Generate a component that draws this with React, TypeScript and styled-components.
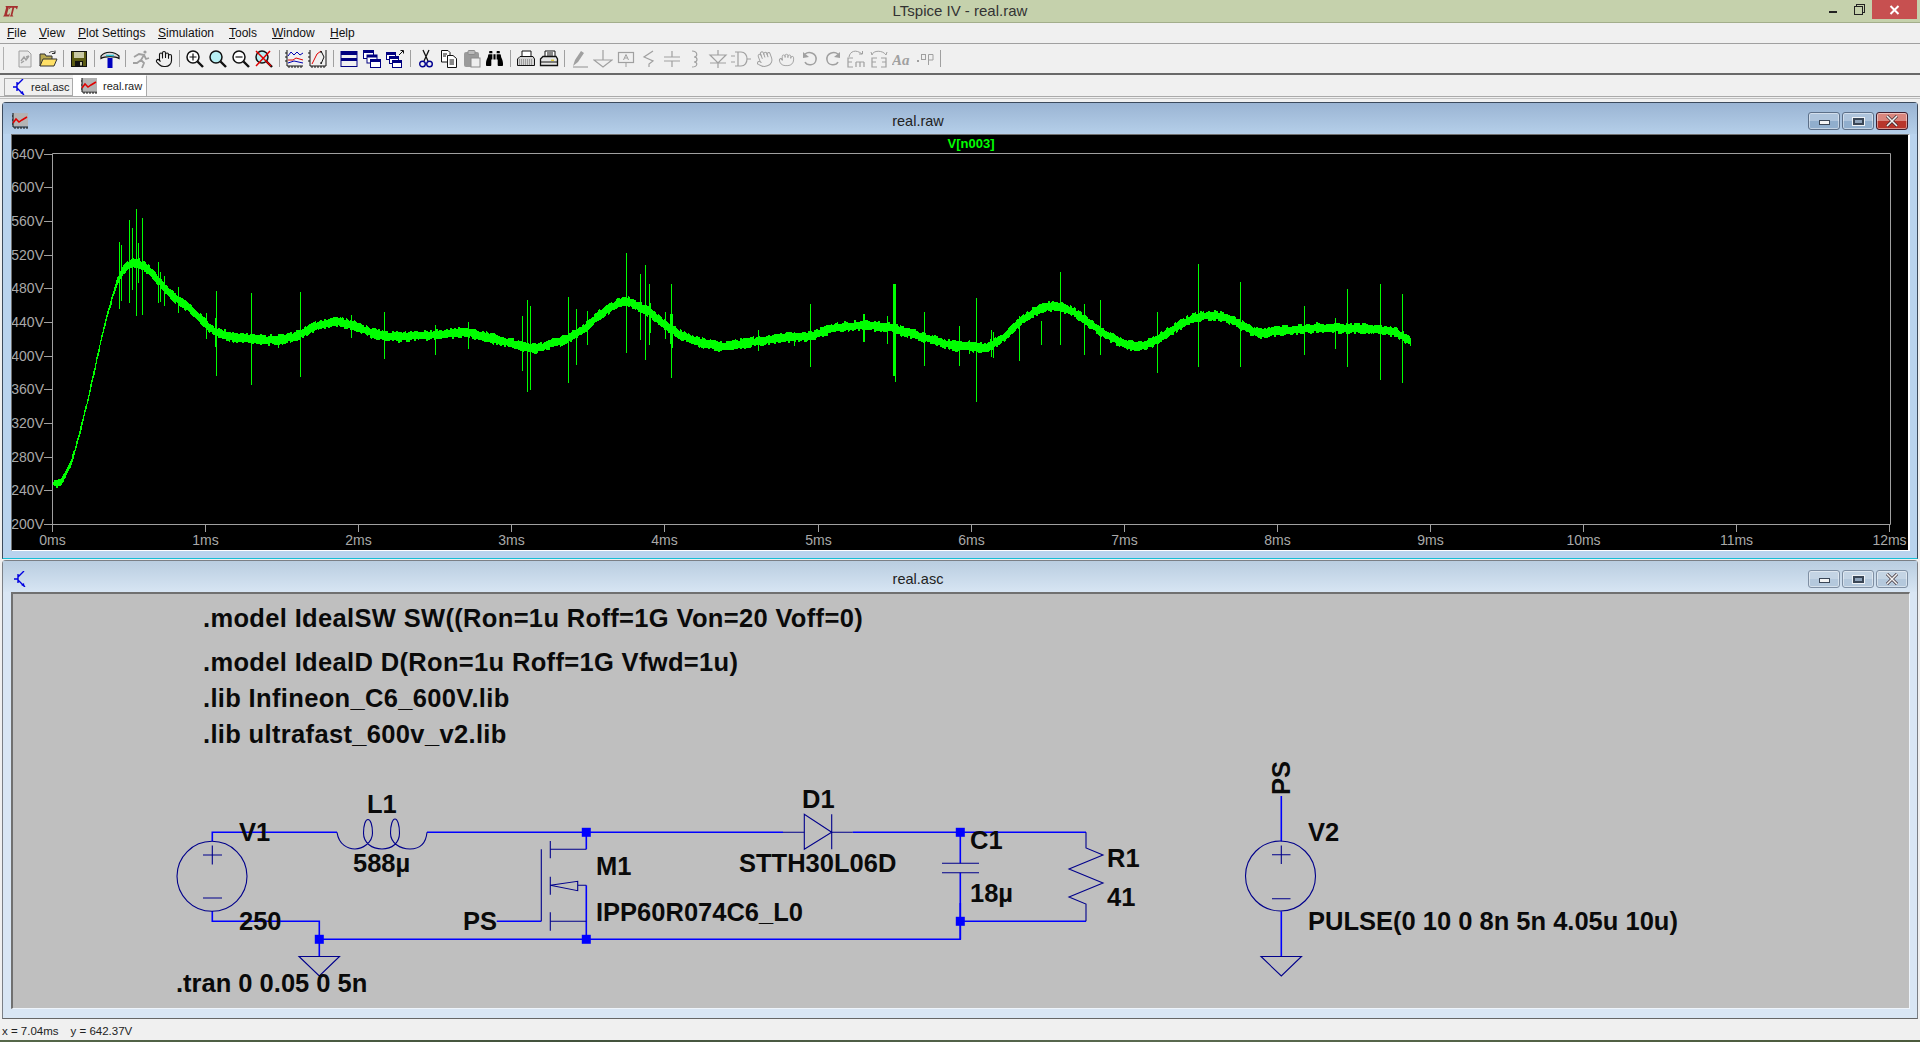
import React, { Fragment, ReactNode } from 'react';
import styled, { createGlobalStyle } from 'styled-components';
import { FaBinoculars } from 'react-icons/fa';
import { Grab, Hand } from 'lucide-react';

const GlobalStyle = createGlobalStyle`
  html, body {
    margin: 0;
    padding: 0;
    background: #f0f0f0;
    font-family: 'Liberation Sans', Arial, sans-serif;
  }
`;

const Page = styled.div`
  width: 1920px;
  height: 1042px;
  display: flex;
  flex-direction: column;
  overflow: hidden;
  background: #f0f0f0;
`;

const TitleBar = styled.div`
  height: 22px;
  display: grid;
  grid-template-columns: 1fr auto 1fr;
  background: #c5d1ac;
  border-bottom: 1px solid #a3ae8c;
`;

const TitleLeft = styled.div`
  display: flex;
  align-items: center;
  padding-left: 3px;
`;

const TitleText = styled.div`
  font-size: 15px;
  line-height: 22px;
  color: #333;
`;

const TitleButtons = styled.div`
  display: flex;
  justify-content: flex-end;
  padding-right: 3px;
`;

const SysButton = styled.div<{ $close?: boolean }>`
  width: ${(p) => (p.$close ? 45 : 26)}px;
  height: 19px;
  display: flex;
  align-items: center;
  justify-content: center;
  background: ${(p) => (p.$close ? '#c75050' : 'transparent')};
`;

const SysMin = styled.div`
  width: 8px;
  height: 2px;
  margin-top: 5px;
  background: #222;
`;

const SysRestore = styled.div`
  width: 7px;
  height: 7px;
  margin: 2px 2px 0 0;
  border: 1px solid #222;
  box-shadow: 2px -2px 0 -1px #c5d1ac, 2px -2px 0 0 #222;
`;

const MenuBar = styled.div`
  height: 20px;
  display: flex;
  align-items: center;
  padding-left: 7px;
  font-size: 12px;
  color: #111;
  border-bottom: 1px solid #a0a0a0;
`;

const MenuItem = styled.span<{ $width: number }>`
  width: ${(p) => p.$width}px;
  white-space: nowrap;
`;

const Mnemonic = styled.span`
  text-decoration: underline;
`;

const Toolbar = styled.div`
  height: 29px;
  display: flex;
  align-items: center;
  border-bottom: 2px solid #696969;
`;

const Grip = styled.div`
  width: 1px;
  height: 23px;
  margin: 0 9px 0 3px;
  background: #b0b0b0;
`;

const ToolButton = styled.div`
  width: 23px;
  height: 22px;
  display: flex;
  align-items: center;
  justify-content: center;
`;

const ToolSep = styled.div`
  width: 1px;
  height: 17px;
  margin: 0 3.5px;
  background: #a0a0a0;
`;

const TabBar = styled.div`
  height: 21px;
  display: flex;
  align-items: flex-end;
  padding-left: 4px;
  border-bottom: 1px solid #aaa;
`;

const Tab = styled.div<{ $active?: boolean }>`
  height: ${(p) => (p.$active ? 22 : 18)}px;
  width: ${(p) => (p.$active ? 74 : 69)}px;
  margin-bottom: ${(p) => (p.$active ? -1 : 0)}px;
  box-sizing: border-box;
  display: flex;
  align-items: center;
  gap: 6px;
  padding-left: 8px;
  font-size: 11px;
  color: #222;
  background: ${(p) => (p.$active ? '#fff' : '#f0f0f0')};
  border: 1px solid #aaa;
  border-top-color: ${(p) => (p.$active ? '#fff' : '#aaa')};
  border-left-width: ${(p) => (p.$active ? 0 : 1)}px;
`;

const MdiArea = styled.div`
  margin-top: 1px;
  padding: 3px 2px 0;
  border-top: 1px solid #c0c0c0;
  display: flex;
  flex-direction: column;
  gap: 1px;
`;

const MdiWindow = styled.div<{ $active?: boolean }>`
  height: ${(p) => (p.$active ? 457 : 459)}px;
  box-sizing: border-box;
  display: flex;
  flex-direction: column;
  padding: 0 7px ${(p) => (p.$active ? 7 : 9)}px 8px;
  border: 1px solid ${(p) => (p.$active ? '#3c4a5c' : '#7b7f85')};
  border-bottom-color: ${(p) => (p.$active ? '#16bfd6' : '#666')};
  border-radius: 4px 4px 0 0;
  background: ${(p) => (p.$active ? '#b9d3ee' : '#d9e6f4')};
`;

const Caption = styled.div<{ $active?: boolean }>`
  height: 31px;
  flex: none;
  box-sizing: border-box;
  margin: 0 -7px 0 -8px;
  padding: 5px 9px 0;
  display: flex;
  align-items: center;
  background: linear-gradient(${(p) => (p.$active ? '#9ab4d3, #b5cfe9' : '#b9cde0, #d7e5f3')});
`;

const CaptionIcon = styled.div`
  width: 16px;
  display: flex;
  justify-content: center;
`;

const CaptionTitle = styled.div`
  flex: 1;
  text-align: center;
  font-size: 14.5px;
  color: #222;
`;

const CaptionButtons = styled.div`
  display: flex;
  gap: 2px;
`;

const CaptionButton = styled.div<{ $variant: 'plain' | 'idle' | 'close' }>`
  width: 32px;
  height: 18px;
  box-sizing: border-box;
  display: flex;
  align-items: center;
  justify-content: center;
  border-radius: 3px;
  border: 1px solid ${(p) => (p.$variant === 'close' ? '#3f1c2c' : p.$variant === 'plain' ? '#5c6f88' : '#7f8fa3')};
  box-shadow: inset 0 0 0 1px rgba(255, 255, 255, 0.45);
  background: ${(p) =>
    p.$variant === 'close'
      ? 'linear-gradient(#d9867e 0 50%, #b8352b 50% 100%)'
      : p.$variant === 'plain'
        ? 'linear-gradient(#aec4dc 0 50%, #90aecd 50% 100%)'
        : 'linear-gradient(#c4d4e4 0 50%, #b4c8dc 50% 100%)'};
`;

const MinGlyph = styled.div`
  width: 9px;
  height: 3px;
  margin-top: 3px;
  background: #f4f4f4;
  border: 1px solid #3a4656;
`;

const MaxGlyph = styled.div`
  width: 7px;
  height: 3px;
  background: #8fa3ba;
  border: 2px solid #3a4656;
  box-shadow: 0 0 0 1px #eef2f6;
`;

const PlotClient = styled.div`
  flex: 1;
  background: #000;
  border-style: solid;
  border-color: #707070 #fff #fff #707070;
  border-width: 1px 2px 1px 1px;
  overflow: hidden;
`;

const SchematicClient = styled.div`
  flex: 1;
  background: #bfbfbf;
  border-style: solid;
  border-color: #707070 #eef4fb #eef4fb #707070;
  border-width: 2px 1px 1px 2px;
  overflow: hidden;
`;

const Canvas = styled.svg`
  display: block;
`;

const AxisText = styled.text`
  font-family: 'Liberation Sans', Arial, sans-serif;
  font-size: 14px;
  fill: #a9a9a9;
`;

const TraceName = styled.text`
  font-family: 'Liberation Sans', Arial, sans-serif;
  font-size: 13px;
  font-weight: 700;
  fill: #00ff00;
`;

const SchemText = styled.text<{ $spaced?: boolean }>`
  font-family: 'Liberation Sans', Arial, sans-serif;
  font-size: 25.5px;
  font-weight: 700;
  fill: #0a0a0a;
  letter-spacing: ${(p) => (p.$spaced ? '0.34px' : '0')};
`;

const StatusBar = styled.div`
  height: 21px;
  display: flex;
  align-items: center;
  gap: 12px;
  padding: 2px 0 0 2px;
  box-sizing: border-box;
  font-size: 11.5px;
  color: #222;
  background: #f0f0f0;
`;

const DesktopStrip = styled.div`
  height: 2px;
  background: linear-gradient(90deg, #56684a, #42523c 30%, #5a6a50 60%, #4b5a3c);
`;

// ---- plot data, page pixels

const X0 = 52.5;
const PX_MS = 153.1;
const yOf = (v: number) => 153.5 + ((640 - v) * 370.5) / 440;

const curve: [number, number][] = [
  [0, 249], [0.03, 245], [0.07, 253], [0.126, 274], [0.18, 312], [0.235, 351], [0.29, 399], [0.345, 442],
  [0.4, 478], [0.45, 502], [0.52, 512], [0.595, 507], [0.68, 492], [0.77, 472], [0.88, 458], [0.965, 444],
  [1.05, 428], [1.18, 422], [1.4, 418], [1.53, 420], [1.62, 426], [1.73, 436], [1.86, 441], [1.99, 434],
  [2.12, 424], [2.25, 422], [2.5, 425], [2.7, 428], [2.92, 418], [3.14, 407], [3.31, 417], [3.44, 427],
  [3.57, 449], [3.73, 466], [3.86, 456], [3.95, 443], [4.08, 426], [4.23, 415], [4.38, 410], [4.6, 417],
  [4.84, 423], [4.93, 422], [5.1, 433], [5.28, 436], [5.45, 434], [5.65, 424], [5.89, 411], [6.02, 411],
  [6.06, 407], [6.19, 418], [6.3, 438], [6.42, 454], [6.54, 460], [6.66, 453], [6.85, 428], [7.0, 413],
  [7.1, 410], [7.2, 417], [7.34, 434], [7.46, 446], [7.58, 448], [7.7, 443], [7.86, 426], [8.0, 429],
  [8.26, 433], [8.6, 432], [8.78, 428], [8.87, 415],
];

const spikes: [number, number, number][] = [
  [119, 242, 309], [121, 245, 301], [129, 220, 303], [132, 228, 290], [136, 209, 316], [138, 243, 283],
  [142, 218, 315], [158, 262, 303], [160, 272, 302], [164, 276, 306], [178, 287, 313], [206, 313, 339],
  [215, 318, 347], [216, 291, 376], [251, 293, 385], [278, 337, 348], [300, 292, 377], [351, 315, 338],
  [384, 312, 359], [435, 325, 355], [468, 322, 349], [522, 316, 371], [527, 300, 392], [530, 306, 390],
  [568, 297, 383], [576, 309, 365], [587, 311, 345], [626, 253, 353], [640, 274, 340], [645, 265, 360],
  [649, 284, 345], [650, 303, 333], [665, 312, 339], [671, 284, 378], [670, 314, 344], [672, 314, 348],
  [758, 330, 351], [794, 332, 346], [810, 304, 367], [863, 314, 342], [864, 314, 342], [887, 316, 344],
  [893, 284, 376], [894, 284, 376], [895, 284, 382], [924, 312, 366], [959, 326, 366], [969, 340, 354],
  [976, 298, 402], [991, 330, 357], [993, 332, 358], [1019, 316, 361], [1041, 321, 345], [1060, 272, 345],
  [1084, 304, 355], [1100, 300, 355], [1157, 312, 373], [1198, 264, 367], [1240, 282, 367], [1304, 306, 355],
  [1335, 318, 349], [1347, 289, 367], [1380, 284, 380], [1402, 294, 383],
];

const rawV = (ms: number) => {
  for (let i = 1; i < curve.length; i++) {
    if (ms <= curve[i][0]) {
      const [a, va] = curve[i - 1];
      const [b, vb] = curve[i];
      return va + ((vb - va) * (ms - a)) / (b - a);
    }
  }
  return curve[curve.length - 1][1];
};

const smoothV = (ms: number) => {
  let sum = 0;
  for (let k = -4; k <= 4; k++) sum += rawV(Math.max(0, Math.min(8.87, ms + (k * 1.5) / PX_MS)));
  return sum / 9;
};

// noise is held for two columns, the real trace is blocky rather than fuzzy
const buildTrace = () => {
  let d = '';
  let seed = 12345;
  const rnd = () => {
    seed = (seed * 1103515245 + 12345) & 0x7fffffff;
    return seed / 0x7fffffff;
  };
  let nTop = 0;
  let nBottom = 0;
  for (let x = 53; x <= 1410; x++) {
    const ms = (x - X0) / PX_MS;
    const y = yOf(smoothV(ms));
    const band = ms < 0.4 ? 1.8 : ms < 0.55 ? 3 : 3.2;
    if (x % 2 === 0) {
      nTop = rnd() * 2.6;
      nBottom = rnd() * 2.6;
    }
    const top = y - band - nTop;
    const bottom = y + band + nBottom;
    d += `M${x}.5 ${top.toFixed(0)}V${bottom.toFixed(0)}`;
  }
  for (const [x, a, b] of spikes) d += `M${x}.5 ${a}V${b}`;
  return d;
};

const tracePath = buildTrace();

const yLabels = [640, 600, 560, 520, 480, 440, 400, 360, 320, 280, 240, 200];
const xLabels = Array.from({ length: 13 }, (_, i) => i);

const PlotCanvas = () => (
  <Canvas width={1896} height={415} viewBox="12 135 1896 415">
    <path d="M52.5 153.5H1890.5V524.5H52.5Z" fill="none" stroke="#a0a0a0" />
    {yLabels.map((v) => {
      const y = Math.round(yOf(v)) + 0.5;
      return (
        <Fragment key={v}>
          <path d={`M44 ${y}H52`} stroke="#a0a0a0" />
          <AxisText x={44} y={y + 4} textAnchor="end">{`${v}V`}</AxisText>
        </Fragment>
      );
    })}
    {xLabels.map((m) => {
      const x = Math.round(X0 + m * PX_MS - 0.5) + 0.5;
      return (
        <Fragment key={m}>
          <path d={`M${x} 524V532`} stroke="#a0a0a0" />
          <AxisText x={x} y={545} textAnchor="middle">{`${m}ms`}</AxisText>
        </Fragment>
      );
    })}
    <TraceName x={971} y={148} textAnchor="middle">V[n003]</TraceName>
    <path d={tracePath} stroke="#00ff00" strokeWidth={1} fill="none" shapeRendering="crispEdges" />
  </Canvas>
);

// ---- schematic, page pixels

const WIRE = '#0000ff';
const PART = '#00008b';

const wires = [
  'M212.3 841V832.3H337',
  'M427 832.3H783',
  'M852.7 832.3H1086',
  'M212.3 911V921.3H319.3V956',
  'M319.3 939.3H960.3V903',
  'M960.3 832.3V863.3',
  'M960.3 872.7V939.3',
  'M960.3 921.3H1086',
  'M496.7 921.3H541.3',
  'M586.3 832.3V849.3',
  'M586.3 885.3V939.3',
  'M1281.3 796V841.3',
  'M1281.3 911.3V956',
];

const parts = [
  'M203 855H222M212.3 845.5V864.5M203 898H222',
  'M337 832.3C339 845 348 849 355 849C362 849 372.5 843 372.5 833C372.5 825 370.5 819.5 368 819.5C365.5 819.5 363.5 825 363.5 833C363.5 843 372 849 382 849C392 849 399.5 843 399.5 833C399.5 825 397.5 819 395 819C392.5 819 390.5 825 390.5 833C390.5 843 400 849 410 849C420 849 426 843 427 832.3',
  'M299 956.5H339.5L319.3 976Z',
  'M541.3 849.3V921.3',
  'M550.3 841V858.3M550.3 876.7V894.7M550.3 912.3V930.7',
  'M550.3 849.3H586.3M550.3 921.3H586.3',
  'M550.3 885.3L577.7 881.3V890.7ZM577.7 885.3H586.3',
  'M783 832.3H804.3M831.7 832.3H852.7',
  'M804.3 814.3V849.3L831.7 832.3ZM831.7 814.3V849.3',
  'M942 863.3H979M942 872.7H979',
  'M1086 832.3V848L1103 855L1069 869L1103 883L1069 897L1086 904V921.3',
  'M1272 854.7H1290.5M1281.3 845.5V864M1272 898.7H1290.5',
  'M1261 956.5H1301.5L1281.3 976Z',
];

const junctions: [number, number][] = [
  [319.3, 939.3], [586.3, 832.3], [586.3, 939.3], [960.3, 832.3], [960.3, 921.3],
];

const directives: [string, number][] = [
  ['.model IdealSW SW((Ron=1u Roff=1G Von=20 Voff=0)', 627],
  ['.model IdealD D(Ron=1u Roff=1G Vfwd=1u)', 671],
  ['.lib Infineon_C6_600V.lib', 707],
  ['.lib ultrafast_600v_v2.lib', 743],
];

const labels: [string, number, number][] = [
  ['V1', 239, 841],
  ['L1', 367, 813],
  ['588µ', 353, 872],
  ['250', 239, 930],
  ['PS', 463, 930],
  ['M1', 596, 875],
  ['IPP60R074C6_L0', 596, 921],
  ['D1', 802, 808],
  ['STTH30L06D', 739, 872],
  ['C1', 970, 849],
  ['18µ', 970, 902],
  ['R1', 1107, 867],
  ['41', 1107, 906],
  ['.tran 0 0.05 0 5n', 176, 992],
  ['V2', 1308, 841],
  ['PULSE(0 10 0 8n 5n 4.05u 10u)', 1308, 930],
];

const SchematicCanvas = () => (
  <Canvas width={1896} height={414} viewBox="13 594 1896 414">
    {wires.map((d) => (
      <path key={d} d={d} stroke={WIRE} strokeWidth={1.6} fill="none" />
    ))}
    {parts.map((d) => (
      <path key={d} d={d} stroke={PART} strokeWidth={1.1} fill="none" />
    ))}
    <circle cx={212} cy={876.3} r={35} stroke={PART} strokeWidth={1.1} fill="none" />
    <circle cx={1280.5} cy={876} r={35} stroke={PART} strokeWidth={1.1} fill="none" />
    {junctions.map(([x, y]) => (
      <rect key={`${x}-${y}`} x={x - 4.5} y={y - 4.5} width={9} height={9} fill={WIRE} />
    ))}
    {directives.map(([t, y]) => (
      <SchemText key={t} x={203} y={y} $spaced>{t}</SchemText>
    ))}
    {labels.map(([t, x, y]) => (
      <SchemText key={t} x={x} y={y}>{t}</SchemText>
    ))}
    <SchemText x={0} y={0} letterSpacing={1} transform="translate(1289.5 795) rotate(-90)">PS</SchemText>
  </Canvas>
);

// ---- icons

const Ico = ({ children, size = 20 }: { children: ReactNode; size?: number }) => (
  <svg width={size} height={size} viewBox="0 0 20 20" fill="none">
    {children}
  </svg>
);

const Magnifier = ({ children, fill = '#fff' }: { children?: ReactNode; fill?: string }) => (
  <Ico>
    <circle cx="8" cy="8" r="6" fill={fill} stroke="#111" strokeWidth="1.5" />
    <path d="M12.5 12.5L18 18" stroke="#111" strokeWidth="2.4" />
    {children}
  </Ico>
);

const GRAY = '#a0a0a0';

const PlotIcon = ({ size = 16 }: { size?: number }) => (
  <svg width={size} height={size} viewBox="0 0 16 16" fill="none">
    <rect x="1" y="0" width="15" height="13" fill="#b4b4b4" />
    <path d="M1 0V14H16M3 14V16M6 14V16M9 14V16M12 14V16M15 14V16M0 3H1M0 7H1M0 11H1" stroke="#111" />
    <path d="M1 10L4 6L7 9L10 7L15 4" stroke="#e00000" strokeWidth="1.5" />
  </svg>
);

const TransistorIcon = ({ width = 12, height = 16 }: { width?: number; height?: number }) => (
  <svg width={width} height={height} viewBox="0 0 12 16" fill="none">
    <path d="M0 8H4M4 3V12M4 6L10 0M4 9L11 16" stroke="#0000e0" strokeWidth="1.4" />
    <path d="M7 14L10 12L10.5 15.5Z" fill="#0000e0" />
  </svg>
);

const tools: (ReactNode | null)[] = [
  <Ico key="new">
    <path d="M4 2H13L16 5V18H4Z" fill="#e9e9e9" stroke={GRAY} />
    <path d="M6 12L9 8L11 11L14 7M14 7L11 8M6 14L9 12" stroke={GRAY} strokeWidth="1.4" />
  </Ico>,
  <Ico key="open">
    <path d="M2 17V5H7L8 7H14V10" fill="#b8a850" stroke="#333" />
    <path d="M2 17L5 10H19L16 17Z" fill="#ffe066" stroke="#333" />
    <path d="M11 4C13 2 16 2 17 4M17 1.5V4.5H14" stroke="#333" />
  </Ico>,
  null,
  <Ico key="save">
    <rect x="2.5" y="2.5" width="15" height="15" fill="#5a5a12" stroke="#111" />
    <rect x="5" y="3" width="10" height="6" fill="#c9c9a4" />
    <rect x="6" y="12" width="8" height="5.5" fill="#111" />
    <rect x="11" y="13" width="2" height="3.5" fill="#c9c9a4" />
  </Ico>,
  null,
  <Ico key="hammer">
    <path d="M1 7C5 2 14 2 19 7V9.5C15 7 5 7 1 9.5Z" fill="#d8d8d8" stroke="#111" strokeWidth="1.2" />
    <path d="M6 6.5H14" stroke="#30c8d8" strokeWidth="1.4" />
    <rect x="7.5" y="9" width="5" height="10" fill="#0000c0" />
  </Ico>,
  null,
  <Ico key="run">
    <circle cx="14" cy="3" r="1.6" fill={GRAY} />
    <path d="M3 8L8 5L13 6L10 11L13 14L11 19M10 11L6 14L2 14M13 6L15 10L18 9" stroke={GRAY} strokeWidth="1.8" />
  </Ico>,
  <Hand key="hand" size={18} strokeWidth={1.5} color="#111" />,
  null,
  <Magnifier key="zin">
    <path d="M4.5 8H11.5M8 4.5V11.5" stroke="#111" strokeWidth="1.2" />
  </Magnifier>,
  <Magnifier key="zarea" fill="#b8f0f4" />,
  <Magnifier key="zout">
    <path d="M4.5 8H11.5" stroke="#111" strokeWidth="1.2" />
  </Magnifier>,
  <Magnifier key="zoff" fill="#b8f0f4">
    <path d="M2 2L17 17M16 2L2 17" stroke="#e00000" strokeWidth="1.5" />
  </Magnifier>,
  null,
  <Ico key="plot1">
    <path d="M2 1V17H18M4 17V19M7 17V19M10 17V19M13 17V19M16 17V19M0 4H2M0 8H2M0 12H2" stroke="#111" />
    <path d="M3 7L6 3L9 6L12 3L15 6L18 4" stroke="#0000b0" />
    <path d="M3 11H8L11 9L18 11" stroke="#e00000" />
    <path d="M3 14L9 12L18 14" stroke="#0000b0" />
  </Ico>,
  <Ico key="plot2">
    <path d="M2 1V17H18M4 17V19M7 17V19M10 17V19M13 17V19M16 17V19M0 4H2M0 8H2M0 12H2M18 1V17" stroke="#111" />
    <path d="M4 15L9 5L13 2" stroke="#e00000" />
    <path d="M13 2L16 8L13 15M13 2V4M13 15V13" stroke="#111" />
  </Ico>,
  null,
  <Ico key="tile">
    <rect x="2" y="2.5" width="16" height="15" stroke="#000080" strokeWidth="1" />
    <rect x="2" y="3" width="16" height="3" fill="#000080" />
    <rect x="2" y="9" width="16" height="3" fill="#000080" />
  </Ico>,
  <Ico key="casc">
    <rect x="1.5" y="1.5" width="10" height="8" fill="#fff" stroke="#000080" />
    <rect x="1.5" y="1.5" width="10" height="2.5" fill="#000080" />
    <rect x="5" y="6" width="10" height="8" fill="#fff" stroke="#000080" />
    <rect x="5" y="6" width="10" height="2.5" fill="#000080" />
    <rect x="8.5" y="10.5" width="10" height="8" fill="#fff" stroke="#000080" />
    <rect x="8.5" y="10.5" width="10" height="2.5" fill="#000080" />
  </Ico>,
  <Ico key="casc2">
    <rect x="1.5" y="3.5" width="9" height="7" fill="#fff" stroke="#000080" />
    <rect x="1.5" y="3.5" width="9" height="2.5" fill="#000080" />
    <rect x="4.5" y="7.5" width="9" height="7" fill="#fff" stroke="#000080" />
    <rect x="4.5" y="7.5" width="9" height="2.5" fill="#000080" />
    <rect x="7.5" y="11.5" width="9" height="7" fill="#fff" stroke="#000080" />
    <rect x="7.5" y="11.5" width="9" height="2.5" fill="#000080" />
    <path d="M14 6L18 2M15.5 1.5H18.5V4.5" stroke="#111" />
  </Ico>,
  null,
  <Ico key="cut">
    <path d="M7 1L12 12M13 1L8 12" stroke="#111" strokeWidth="1.3" />
    <circle cx="6.5" cy="15" r="2.8" stroke="#000090" strokeWidth="1.4" />
    <circle cx="13.5" cy="15" r="2.8" stroke="#000090" strokeWidth="1.4" />
  </Ico>,
  <Ico key="copy">
    <path d="M2.5 1.5H9L11 3.5V13H2.5Z" fill="#fff" stroke="#111" />
    <path d="M8.5 6.5H14L17.5 9.5V18.5H8.5Z" fill="#fff" stroke="#111" />
    <path d="M4 5H8M4 7H7M10.5 11H15M10.5 13H15M10.5 15H15" stroke="#111" />
  </Ico>,
  <Ico key="paste">
    <rect x="2" y="3" width="15" height="15" rx="2" fill="#9a9a9a" />
    <rect x="6" y="1.5" width="7" height="4" rx="1" fill="#bbb" stroke="#8a8a8a" />
    <rect x="9" y="9" width="9" height="9" fill="#eee" stroke="#8a8a8a" />
  </Ico>,
  <FaBinoculars key="bino" size={17} color="#000" />,
  null,
  <Ico key="preview">
    <path d="M6 2H15V8H6Z" fill="#fff" stroke="#111" />
    <path d="M1.5 10L4 7.5H17L18.5 10V16.5H1.5Z" fill="#d4d4d4" stroke="#111" />
    <path d="M3 11H17M3 13H17M3 15H17" stroke="#666" strokeDasharray="1 1" />
  </Ico>,
  <Ico key="print">
    <path d="M6 2H16V8H6Z" fill="#fff" stroke="#111" />
    <path d="M8 4H14M8 6H14" stroke="#111" />
    <path d="M1.5 10L4 7.5H17L18.5 10V16.5H1.5Z" fill="#e4e4e4" stroke="#111" strokeWidth="1.3" />
    <path d="M1.5 13H18.5" stroke="#111" />
    <rect x="12" y="10.5" width="3" height="1.5" fill="#e0d040" />
  </Ico>,
  null,
  <Ico key="wire">
    <path d="M3 18H18" stroke={GRAY} strokeWidth="1.2" />
    <path d="M3 17L5 11L11 2L14 4L8 13Z" fill={GRAY} />
  </Ico>,
  <Ico key="gnd">
    <path d="M10 1V11M1 11H19L10 18Z" stroke={GRAY} strokeWidth="1.2" />
  </Ico>,
  <Ico key="label">
    <rect x="2.5" y="3.5" width="15" height="10" stroke={GRAY} strokeWidth="1.2" />
    <path d="M10 14V18M7.5 11L10 5.5L12.5 11M8.5 9H11.5" stroke={GRAY} />
  </Ico>,
  <Ico key="res">
    <path d="M14 2L5 8L14 12L10 15V18" stroke={GRAY} strokeWidth="1.2" />
  </Ico>,
  <Ico key="cap">
    <path d="M10 2V8M2 8H18M2 12H18M10 12V18" stroke={GRAY} strokeWidth="1.2" />
  </Ico>,
  <Ico key="ind">
    <path d="M7 2C13 2 13 8 9 8M9 8C13 8 13 13 9 13M9 13C13 13 13 18 7 18" stroke={GRAY} strokeWidth="1.2" />
  </Ico>,
  <Ico key="diode">
    <path d="M10 1V6M2 6H18L10 14ZM2 14H18M10 14V19" stroke={GRAY} strokeWidth="1.2" />
  </Ico>,
  <Ico key="comp">
    <path d="M0 7H4M0 13H4M4 3H10C18 3 18 17 10 17H4M7 3V17M16 10H20" stroke={GRAY} strokeWidth="1.2" />
  </Ico>,
  <Hand key="move" size={18} strokeWidth={1.3} color={GRAY} style={{ transform: 'rotate(-20deg)' }} />,
  <Grab key="drag" size={17} strokeWidth={1.3} color={GRAY} />,
  <Ico key="undo">
    <path d="M5 5C9 2 17 4 16 11C15 17 7 17 5 13" stroke={GRAY} strokeWidth="1.5" />
    <path d="M3 3V9L9 8Z" fill={GRAY} />
  </Ico>,
  <Ico key="redo">
    <path d="M15 5C11 2 3 4 4 11C5 17 13 17 15 13" stroke={GRAY} strokeWidth="1.5" />
    <path d="M17 3V9L11 8Z" fill={GRAY} />
  </Ico>,
  <Ico key="rot">
    <path d="M3 8C4 2 10 0 16 5M13 5H16.5V2" stroke={GRAY} />
    <path d="M7 9H2V18H7M2 13H6M10 13V18M14 18V13M18 13V18M10 13H18" stroke={GRAY} strokeWidth="1.2" />
  </Ico>,
  <Ico key="mir">
    <path d="M3 6C4 1 14 1 17 6M3 6L2 3M17 6L18 3" stroke={GRAY} />
    <path d="M8 9H3V18H8M3 13H7M12 9H17V18H12M17 13H13" stroke={GRAY} strokeWidth="1.2" />
  </Ico>,
  <Ico key="text">
    <text x="0" y="16" fontFamily="'Liberation Serif', serif" fontStyle="italic" fontWeight="700" fontSize="15" fill={GRAY}>
      Aa
    </text>
  </Ico>,
  <Ico key="op">
    <rect x="2" y="11" width="2" height="2" fill={GRAY} />
    <rect x="6.5" y="5.5" width="4" height="5" stroke={GRAY} />
    <path d="M13.5 16V5.5H18V11H13.5" stroke={GRAY} />
  </Ico>,
];

const LtLogo = () => (
  <svg width="15" height="11" viewBox="0 0 15 11">
    <path
      d="M2.5 0H6.8L5.8 1.5L3.9 8.6H6L7.2 6.5L6.2 10.5H0L1.2 9L3.1 1.7ZM6.5 0H15L14 3.5L12.6 1.8H11.2L9.4 9L10.4 10.5H6.6L7.7 9L9.4 1.8H7.8L5.8 3.5Z"
      fill="#a5302f"
    />
  </svg>
);

const menus: [string, string, number][] = [
  ['F', 'ile', 32],
  ['V', 'iew', 39],
  ['P', 'lot Settings', 80],
  ['S', 'imulation', 71],
  ['T', 'ools', 43],
  ['W', 'indow', 58],
  ['H', 'elp', 40],
];

const CaptionX = () => (
  <svg width={14} height={12} viewBox="0 0 14 12">
    <path d="M2 1L12 11M12 1L2 11" stroke="#3a2a30" strokeWidth="3" />
    <path d="M2 1L12 11M12 1L2 11" stroke="#f4f4f4" strokeWidth="1.6" />
  </svg>
);

const App = () => {
  return (
    <Page>
      <GlobalStyle />
      <TitleBar>
        <TitleLeft>
          <LtLogo />
        </TitleLeft>
        <TitleText>LTspice IV - real.raw</TitleText>
        <TitleButtons>
          <SysButton>
            <SysMin />
          </SysButton>
          <SysButton>
            <SysRestore />
          </SysButton>
          <SysButton $close>
            <svg width="11" height="10" viewBox="0 0 11 10">
              <path d="M1.5 1L9.5 9M9.5 1L1.5 9" stroke="#fff" strokeWidth="2" />
            </svg>
          </SysButton>
        </TitleButtons>
      </TitleBar>

      <MenuBar>
        {menus.map(([first, rest, width]) => (
          <MenuItem key={first} $width={width}>
            <Mnemonic>{first}</Mnemonic>
            {rest}
          </MenuItem>
        ))}
      </MenuBar>

      <Toolbar>
        <Grip />
        {tools.map((tool, i) =>
          tool === null ? <ToolSep key={i} /> : <ToolButton key={i}>{tool}</ToolButton>,
        )}
        <ToolSep />
      </Toolbar>

      <TabBar>
        <Tab>
          <TransistorIcon />
          real.asc
        </Tab>
        <Tab $active>
          <PlotIcon />
          real.raw
        </Tab>
      </TabBar>

      <MdiArea>
        <MdiWindow $active>
          <Caption $active>
            <CaptionIcon>
              <PlotIcon />
            </CaptionIcon>
            <CaptionTitle>real.raw</CaptionTitle>
            <CaptionButtons>
              <CaptionButton $variant="plain">
                <MinGlyph />
              </CaptionButton>
              <CaptionButton $variant="plain">
                <MaxGlyph />
              </CaptionButton>
              <CaptionButton $variant="close">
                <CaptionX />
              </CaptionButton>
            </CaptionButtons>
          </Caption>
          <PlotClient>
            <PlotCanvas />
          </PlotClient>
        </MdiWindow>

        <MdiWindow>
          <Caption>
            <CaptionIcon>
              <TransistorIcon />
            </CaptionIcon>
            <CaptionTitle>real.asc</CaptionTitle>
            <CaptionButtons>
              <CaptionButton $variant="idle">
                <MinGlyph />
              </CaptionButton>
              <CaptionButton $variant="idle">
                <MaxGlyph />
              </CaptionButton>
              <CaptionButton $variant="idle">
                <CaptionX />
              </CaptionButton>
            </CaptionButtons>
          </Caption>
          <SchematicClient>
            <SchematicCanvas />
          </SchematicClient>
        </MdiWindow>
      </MdiArea>

      <StatusBar>
        <span>x = 7.04ms</span>
        <span>y = 642.37V</span>
      </StatusBar>
      <DesktopStrip />
    </Page>
  );
};

export default App;
